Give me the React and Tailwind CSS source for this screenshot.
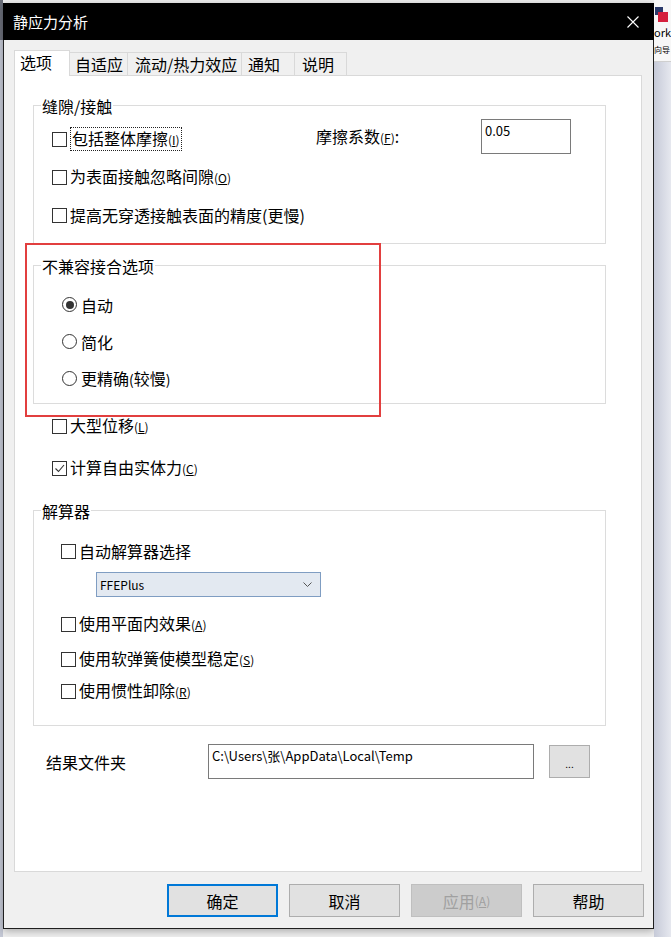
import React from 'react';

// 静应力分析 dialog, "选项" tab

function Key({ k }) {
    return (
        <span className="text-[12px]">
            (<span className="underline">{k}</span>)
        </span>
    );
}

function Box({ checked }) {
    return (
        <span className="w-[15px] h-[15px] shrink-0 border border-[#333] bg-white flex items-center justify-center">
            {checked && (
                <svg width="13" height="13" viewBox="0 0 13 13">
                    <polyline points="2.5,6.5 5.5,9.5 11,3" fill="none" stroke="#333" strokeWidth="1.1" />
                </svg>
            )}
        </span>
    );
}

function Check({ label, k, checked, focus, className = '' }) {
    return (
        <div className={`flex items-center gap-[3px] ${className}`}>
            <Box checked={checked} />
            <span className={focus ? 'border border-dotted border-[#222] px-[1px] leading-[20px]' : 'leading-[20px]'}>
                {label}
                {k && <Key k={k} />}
            </span>
        </div>
    );
}

function Radio({ label, selected }) {
    return (
        <div className="h-[37px] flex items-center gap-[4px]">
            <span className="w-[15px] h-[15px] shrink-0 rounded-full border border-[#333] bg-white flex items-center justify-center">
                {selected && <span className="w-[8px] h-[8px] rounded-full bg-[#333]" />}
            </span>
            <span className="leading-[20px]">{label}</span>
        </div>
    );
}

function Group({ title, className = '', children }) {
    return (
        <div className={`ml-[18px] w-[573px] border border-[#dcdcdc] ${className}`}>
            <div className="-mt-[10px] ml-[7px] w-fit bg-white px-[1px] leading-[20px]">{title}</div>
            {children}
        </div>
    );
}

const TABS = [
    { name: '自适应', cls: 'w-[58px] pl-[5px]' },
    { name: '流动/热力效应', cls: 'w-[114px] pl-[7px]' },
    { name: '通知', cls: 'w-[53px] pl-[6px]' },
    { name: '说明', cls: 'w-[52px] pl-[7px]' },
];

function Button({ children, primary, disabled }) {
    const cls = primary
        ? 'border-2 border-[#0078d7] bg-[#e1e1e1] text-black'
        : disabled
            ? 'border border-[#bfbfbf] bg-[#cccccc] text-[#a0a0a0]'
            : 'border border-[#adadad] bg-[#e1e1e1] text-black';
    return (
        <div className={`w-[111px] h-[33px] flex items-center justify-center leading-[20px] ${cls}`}>{children}</div>
    );
}

export default function App() {
    return (
        <div className="w-[671px] h-[937px] overflow-hidden relative flex bg-[#f0f0f0] text-[16px] text-black font-['Noto_Sans_CJK_SC','Noto_Sans',sans-serif]">

            {/* desktop behind, left edge */}
            <div className="w-[3px] shrink-0 flex flex-col">
                <div className="h-[40px] bg-[#6b6f7a]" />
                <div className="flex-1 bg-[#c5c9d6]" />
            </div>

            {/* dialog window */}
            <div className="mt-[3px] w-[651px] h-[926px] shrink-0 flex flex-col shadow-[0_2px_8px_rgba(0,0,0,0.3)]">

                {/* title bar */}
                <div className="h-[37px] bg-black flex items-center justify-between pl-[10px] pr-[15px]">
                    <span className="text-white text-[15px] leading-[20px]">静应力分析</span>
                    <svg width="12" height="12" viewBox="0 0 12 12">
                        <path d="M0.5 0.5 L11.5 11.5 M11.5 0.5 L0.5 11.5" stroke="#fff" strokeWidth="1.1" />
                    </svg>
                </div>

                {/* body */}
                <div className="flex-1 flex flex-col bg-[#f0f0f0] border-x border-b border-[#1f1f1f] pt-[10px] pl-[10px]">

                    {/* tabs */}
                    <div className="h-[25px] flex items-end">
                        <div className="relative z-10 w-[56px] h-[26px] -mb-px bg-white border-l border-t border-r border-[#d9d9d9] flex items-center pl-[5px] pb-[3px] leading-[20px]">
                            选项
                        </div>
                        {TABS.map((t) => (
                            <div key={t.name} className={`${t.cls} h-[23px] border-t border-r border-[#d9d9d9] flex items-center leading-[20px] pb-[1px] whitespace-nowrap`}>
                                {t.name}
                            </div>
                        ))}
                    </div>

                    {/* tab panel */}
                    <div className="w-[628px] h-[797px] bg-white border border-[#d9d9d9] flex flex-col">

                        <Group title="缝隙/接触" className="mt-[29px] pb-[9px]">
                            <div className="pl-[18px] mt-[4px]">
                                <div className="h-[38px] flex items-center">
                                    <div className="w-[264px]">
                                        <Check label="包括整体摩擦" k="I" focus />
                                    </div>
                                    <div className="w-[165px] leading-[20px] -mt-[4px]">
                                        摩擦系数<Key k="F" />:
                                    </div>
                                    <div className="w-[90px] h-[35px] self-start -mt-[1px] border border-[#7a7a7a] bg-white px-[3px] pt-[2px] text-[13px] leading-[18px]">
                                        0.05
                                    </div>
                                </div>
                                <Check label="为表面接触忽略间隙" k="O" className="h-[38px]" />
                                <Check label="提高无穿透接触表面的精度(更慢)" className="h-[38px]" />
                            </div>
                        </Group>

                        <Group title="不兼容接合选项" className="mt-[21px] pb-[6px]">
                            <div className="pl-[28px] mt-[10px]">
                                <Radio label="自动" selected />
                                <Radio label="简化" />
                                <Radio label={<>更精确<span className="text-[14px]">(</span>较慢<span className="text-[14px]">)</span></>} />
                            </div>
                        </Group>

                        <div className="ml-[37px]">
                            <Check label="大型位移" k="L" className="h-[38px] mt-[3px]" />
                            <Check label="计算自由实体力" k="C" checked className="h-[38px] mt-[4px]" />
                        </div>

                        <Group title="解算器" className="mt-[23px] pb-[18px]">
                            <div className="pl-[27px]">
                                <Check label="自动解算器选择" className="h-[32px] mt-[14px]" />
                                <div className="ml-[35px] mt-[5px] w-[225px] h-[25px] border border-[#7f9dc2] bg-[#e3e9f1] flex items-center justify-between pl-[3px] pr-[8px]">
                                    <span className="text-[12px] leading-[16px]">FFEPlus</span>
                                    <svg width="9" height="5" viewBox="0 0 9 5">
                                        <polyline points="0.5,0.5 4.5,4.5 8.5,0.5" fill="none" stroke="#555" strokeWidth="1" />
                                    </svg>
                                </div>
                                <Check label="使用平面内效果" k="A" className="h-[32px] mt-[11px]" />
                                <Check label="使用软弹簧使模型稳定" k="S" className="h-[32px] mt-[3px]" />
                                <Check label="使用惯性卸除" k="R" className="h-[32px]" />
                            </div>
                        </Group>

                        <div className="mt-[18px] ml-[31px] flex items-start">
                            <div className="w-[162px] h-[35px] flex items-center leading-[20px]">结果文件夹</div>
                            <div className="w-[326px] h-[35px] border border-[#7a7a7a] bg-white px-[3px] pt-[2px] text-[13px] leading-[18px]">
                                C:\Users\张\AppData\Local\Temp
                            </div>
                            <div className="ml-[15px] mt-[1px] w-[41px] h-[33px] border border-[#adadad] bg-[#e1e1e1] flex items-end justify-center pb-[8px] text-[10px] leading-[10px]">
                                ...
                            </div>
                        </div>
                    </div>

                    {/* dialog buttons */}
                    <div className="mt-[12px] pr-[9px] flex justify-end gap-[11px]">
                        <Button primary>确定</Button>
                        <Button>取消</Button>
                        <Button disabled>应用<Key k="A" /></Button>
                        <Button>帮助</Button>
                    </div>
                </div>
            </div>

            {/* desktop behind, right edge */}
            <div className="flex-1 flex flex-col overflow-hidden">
                <div className="h-[62px] bg-[#f7f7f7] border-b border-[#cfcfcf] flex flex-col">
                    <div className="relative h-[24px] shrink-0">
                        <span className="absolute left-[1px] top-[7px] w-[8px] h-[8px] bg-[#2b3a6b]" />
                        <span className="absolute left-[4px] top-[12px] w-[10px] h-[10px] bg-[#d5203d]" />
                    </div>
                    <div className="h-[17px] text-[11px] leading-[17px] whitespace-nowrap">ork</div>
                    <div className="h-[18px] text-[8px] leading-[18px] whitespace-nowrap">向导</div>
                </div>
                <div className="flex-1 bg-gradient-to-r from-[#c6cad8] to-[#e6e8ef]" />
            </div>

            {/* annotation rectangle */}
            <div className="absolute left-[25px] top-[243px] w-[356px] h-[174px] border-2 border-[#e23f3f] pointer-events-none" />
        </div>
    );
}
